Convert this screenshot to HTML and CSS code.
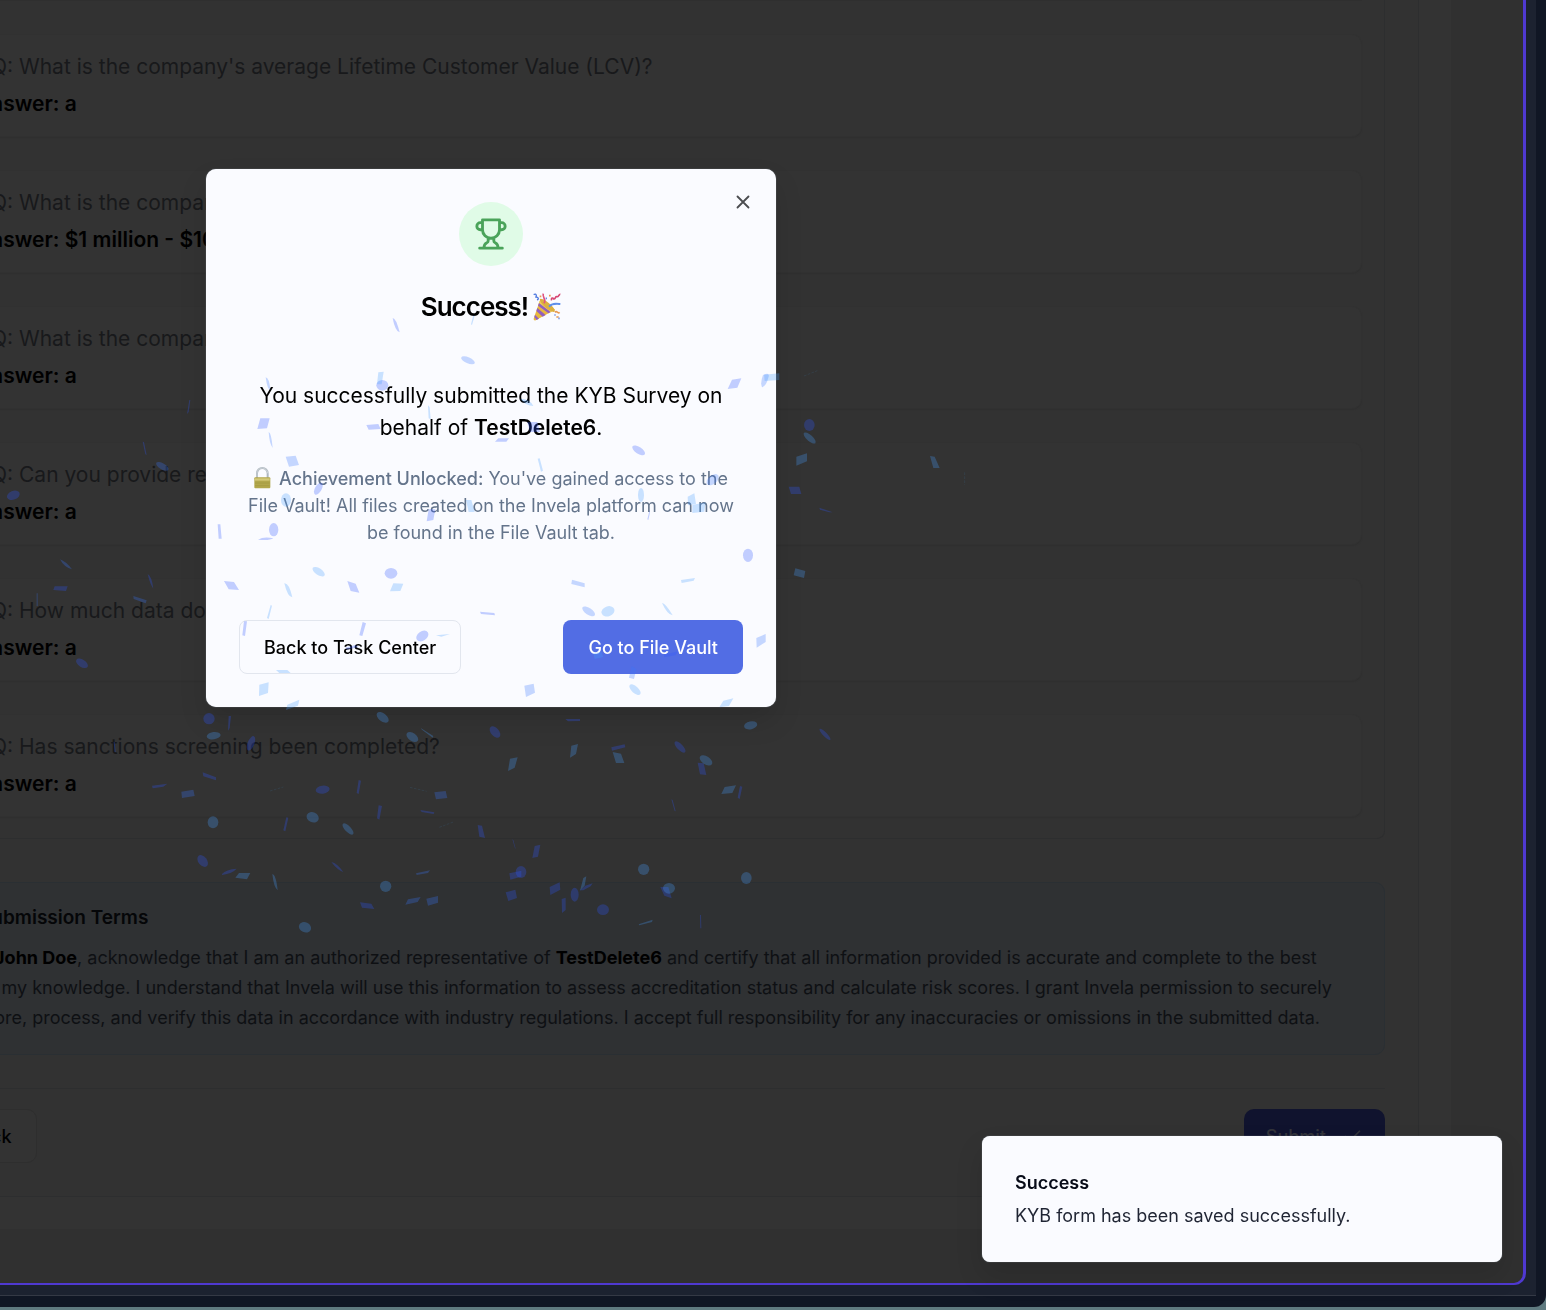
FILE: index.html
```html
<!DOCTYPE html>
<html lang="en">
<head>
<meta charset="utf-8">
<meta name="viewport" content="width=device-width, initial-scale=1">
<title>KYB Survey</title>
<link rel="stylesheet" href="styles.css">
</head>
<body>
<div class="window">
  <div class="window-inner">
    <div class="app">
      <main class="page">
        <div class="form">
          <section class="review">
            <div class="tail"></div>
            <div class="qa"><p class="question">Q: What is the company's average Lifetime Customer Value (LCV)?</p><p class="answer">Answer: a</p></div>
            <div class="qa"><p class="question">Q: What is the company</p><p class="answer">Answer: $1 million - $10</p></div>
            <div class="qa"><p class="question">Q: What is the company</p><p class="answer">Answer: a</p></div>
            <div class="qa"><p class="question">Q: Can you provide rec</p><p class="answer">Answer: a</p></div>
            <div class="qa"><p class="question">Q: How much data does</p><p class="answer">Answer: a</p></div>
            <div class="qa"><p class="question">Q: Has sanctions screening been completed?</p><p class="answer">Answer: a</p></div>
          </section>
          <section class="terms">
            <h3>Submission Terms</h3>
            <p>I, <strong>John Doe</strong>, acknowledge that I am an authorized representative of <strong>TestDelete6</strong> and certify that all information provided is accurate and complete to the best<br>of my knowledge. I understand that Invela will use this information to assess accreditation status and calculate risk scores. I grant Invela permission to securely<br>store, process, and verify this data in accordance with industry regulations. I accept full responsibility for any inaccuracies or omissions in the submitted data.</p>
          </section>
          <div class="form-actions">
            <button class="btn back" type="button">Back</button>
            <button class="btn submit" type="button">Submit
              <svg width="21" height="21" viewBox="0 0 24 24" fill="none" stroke="currentColor" stroke-width="2" stroke-linecap="round" stroke-linejoin="round" aria-hidden="true"><path d="M20 6 9 17l-5-5"/></svg>
            </button>
          </div>
        </div>
      </main>
    </div>
  </div>
</div>

<div class="overlay">
  <div class="modal" role="dialog" aria-modal="true" aria-labelledby="modal-title">
    <button class="close" type="button" aria-label="Close">
      <svg width="22" height="22" viewBox="0 0 24 24" fill="none" stroke="currentColor" stroke-width="2" stroke-linecap="round" aria-hidden="true"><path d="M18 6 6 18M6 6l12 12"/></svg>
    </button>
    <div class="trophy">
      <svg width="34" height="34" viewBox="0 0 24 24" fill="none" stroke="currentColor" stroke-width="2" stroke-linecap="round" stroke-linejoin="round" aria-hidden="true"><path d="M6 9H4.500a2.500 2.500 0 0 1 0-5H6M18 9h1.500a2.500 2.500 0 0 0 0-5H18M4 22h16M10 14.660V17c0 .550-.470.980-.970 1.210C7.850 18.750 7 20.240 7 22M14 14.660V17c0 .550.470.980.970 1.210C16.150 18.750 17 20.240 17 22M18 2H6v7a6 6 0 0 0 12 0V2Z"/></svg>
    </div>
    <h2 id="modal-title">Success!
      <svg width="28" height="28" viewBox="0 0 84 84" aria-hidden="true">
        <path d="M20 24 2 77q-1 6 6 5l58-32Z" fill="#e8b83c"/>
        <path d="M20 24 15 39l31 22 20-11Z" fill="#f3cf58"/>
        <path d="M13 45 38 66l-9 5L10 54ZM6 65l12 12-7 4-7-9ZM18 30l35 27-7 4L15 38Z" fill="#9260bd"/>
        <ellipse cx="43" cy="37" rx="8" ry="29" transform="rotate(-50 43 37)" fill="#dcb040"/>
        <path d="M48 41c9-11 21-9 34-8" fill="none" stroke="#5d8eea" stroke-width="6"/>
        <path d="M33 31C42 20 26 12 31 2" fill="none" stroke="#e0527f" stroke-width="5"/>
        <path d="M2 5c9-6 10 7 5 8 9-2 12 5 5 8" fill="none" stroke="#4d78df" stroke-width="4"/>
        <path d="M56 22c-3-8 5-9 6-4 6 1 5-10 10-7 5 2 5-8 10-7" fill="none" stroke="#d64773" stroke-width="5"/>
        <path d="M66 58c6-7 7 6 14 0M70 72h7M48 8h5M20 10h5" fill="none" stroke="#e79a55" stroke-width="5"/>
        <path d="M38 16h4M76 76h4M64 66h4" stroke="#6a8ae2" stroke-width="5"/>
      </svg>
    </h2>
    <p class="message">You successfully submitted the KYB Survey on<br>behalf of <strong>TestDelete6</strong>.</p>
    <p class="note"><svg class="lock" width="17" height="22" viewBox="0 0 51 66" aria-hidden="true"><path d="M9 34V19a16 16 0 0 1 32 0v15" fill="none" stroke="#aeb7bf" stroke-width="6"/><path d="M9 30V19a16 16 0 0 1 32 0" fill="none" stroke="#d9dfe4" stroke-width="2"/><rect x="1" y="31" width="48" height="33" rx="3" fill="#b2a74c"/><path d="M3 34h44v7H3z" fill="#d3c978"/><path d="M3 48h44M3 56h44" stroke="#a2973f" stroke-width="2"/></svg> <strong>Achievement Unlocked:</strong> You've gained access to the<br>File Vault! All files created on the Invela platform can now<br>be found in the File Vault tab.</p>
    <div class="modal-actions">
      <button class="btn outline" type="button">Back to Task Center</button>
      <button class="btn primary" type="button">Go to File Vault</button>
    </div>
  </div>
</div>

<div class="toast" role="status">
  <strong>Success</strong>
  <p>KYB form has been saved successfully.</p>
</div>

<svg class="confetti" width="1546" height="1310" viewBox="0 0 1546 1310" aria-hidden="true">
  <g transform="translate(200 160) scale(.33333)">
    <g class="c1">
      <path d="M181 775l28 0-8 30-29 2ZM499 795l36-3 7 15-36 2Z"/>
      <path d="M578 474q10 0 21 43-14-4-21-43Z"/>
      <ellipse cx="547" cy="676" rx="18" ry="16"/>
    </g>
    <g class="c2">
      <ellipse cx="804" cy="601" rx="22" ry="9" transform="rotate(23 804 601)"/>
      <path d="M197 652q11 2 14 38-9-1-14-38ZM206 816q8 2 12 48-10-14-12-48Z"/>
    </g>
    <g class="c3"><path d="M535 637l16-2-6 38-14 0ZM684 736l5 6 3 36-6-3ZM820 466l4 1-8 28-3-2Z"/></g>
  </g>
  <g transform="translate(490 160) scale(.33333)">
    <path class="c1" d="M726 659l28-4-12 28-29 4ZM112 786h30l8 30h-30Z"/>
    <path class="c2" d="M819 645q20-10 17 5-7 28-20 32-6-13 3-37Z"/>
    <path class="c3" d="M822 644l46-4v20l-44 3ZM90 716q30 0 40 22-22 0-40-22Z"/>
  </g>
  <g transform="translate(200 430) scale(.33333)">
    <g class="c1">
      <ellipse cx="355" cy="176" rx="10" ry="20" transform="rotate(30 355 176)"/>
      <ellipse cx="221" cy="299" rx="14" ry="20"/>
      <ellipse cx="573" cy="430" rx="19" ry="16"/>
      <ellipse cx="667" cy="618" rx="20" ry="14" transform="rotate(-35 667 618)"/>
      <path d="M686 238l20 0-6 32-20 4ZM53 283h8l4 43h-9ZM174 329q18-11 46-4-12 8-46 4ZM72 453l30 3 15 24-31-2ZM442 453l25 8 11 27-26-5ZM488 576l10 4-11 38-9-2ZM132 574h9l-6 44-8-2ZM840 545l43 4 2 7-42-4ZM436 653l30-8 10 6-36 8Z"/>
    </g>
    <g class="c2"><path d="M257 80l30-3 10 28-30 5Z"/></g>
    <g class="c3">
      <ellipse cx="258" cy="210" rx="15" ry="20"/>
      <ellipse cx="356" cy="425" rx="21" ry="10" transform="rotate(33 356 425)"/>
      <path d="M798 210h16l10 36h-18ZM580 460l30 1-9 22-31 1ZM253 460q14-2 24 42-14 0-24-42ZM212 525l4 2-10 40-5-3ZM178 764l28-7-2 32-27 9ZM228 720h34l10 9h-34ZM708 616l42-4-26 8ZM262 824l36-15-4 18-36 13Z"/>
    </g>
  </g>
  <g transform="translate(490 430) scale(.33333)">
    <g class="c1">
      <ellipse cx="446" cy="61" rx="22" ry="10" transform="rotate(33 446 61)"/>
      <ellipse cx="774" cy="376" rx="15" ry="20"/>
      <path d="M15 35l10-10h32l-8 10ZM522 674l42-10-8 12-34 6ZM472 268l7-28 1 8-5 22Z"/>
    </g>
    <g class="c2">
      <path d="M246 449l38 11v12l-40-10ZM103 767l28-6 4 27-27 13ZM799 624l28-12v24l-27 17ZM425 708l14 10-7 29-15-4Z"/>
      <ellipse cx="296" cy="544" rx="22" ry="10" transform="rotate(33 296 544)"/>
      <ellipse cx="668" cy="149" rx="21" ry="13" transform="rotate(-40 668 149)"/>
    </g>
    <g class="c3">
      <ellipse cx="453" cy="195" rx="9" ry="21"/><ellipse cx="354" cy="544" rx="20" ry="15" transform="rotate(-20 354 544)"/>
      <ellipse cx="435" cy="779" rx="21" ry="10" transform="rotate(42 435 779)"/>
      <path d="M593 200l20-10 5 32-24 4ZM607 225l40-8-4 28-36 4ZM573 450l42-6-4 8-36 7ZM516 519q10 0 32 37-16-2-32-37ZM143 86l6-1 10 37-6 3ZM700 812l30-7-13 23-29 4ZM310 670l24-5 6 16-26 6Z"/>
    </g>
  </g>
  <g transform="translate(0 700) scale(.33333)">
    <g class="c1">
      <circle cx="627" cy="56" r="17"/>
      <ellipse cx="753" cy="130" rx="10" ry="23" transform="rotate(22 753 130)"/>
      <ellipse cx="968" cy="269" rx="21" ry="12" transform="rotate(-7 968 269)"/>
      <ellipse cx="608" cy="483" rx="20" ry="13" transform="rotate(52 608 483)"/>
      <path d="M686 48l7 0-4 36-5 8ZM608 217l40 15v9l-38-12ZM456 257l46-6-12 9-32 5ZM1076 240l7 2-7 40-6-3ZM1136 316l10 2-8 41-7-4ZM859 352l6 1-9 41-6-3ZM666 522q12-14 44-16-12 14-44 19ZM994 486q18 4 36 30-18-6-36-30ZM1080 607l34 4 9 16-37-4ZM1261 330l42 7-2 5-36-6ZM341 126h3l3 30h-3Z"/>
    </g>
    <path class="c2" d="M544 275l36-6 4 19-38 6ZM1303 277l34-4 5 21-34 4ZM1224 598l38-7-9 15-37 8ZM1279 596l35-8v20l-30 9ZM1248 520l42-9-6 8-34 6Z"/>
    <g class="c3">
      <ellipse cx="641" cy="107" rx="21" ry="11" transform="rotate(-8 641 107)"/>
      <ellipse cx="1148" cy="52" rx="21" ry="12" transform="rotate(38 1148 52)"/>
      <ellipse cx="1237" cy="111" rx="20" ry="12" transform="rotate(35 1237 111)"/>
      <ellipse cx="639" cy="367" rx="16" ry="18"/><ellipse cx="938" cy="352" rx="19" ry="15" transform="rotate(25 938 352)"/>
      <ellipse cx="1044" cy="387" rx="22" ry="9" transform="rotate(46 1044 387)"/>
      <circle cx="1157" cy="559" r="17"/><ellipse cx="915" cy="682" rx="19" ry="15" transform="rotate(25 915 682)"/>
      <path d="M717 519h34l-10 19-35-5ZM817 522q11 2 16 49-12-10-16-49ZM1262 84l38 24-2 5-32-24Z"/>
      <path d="M810 273l40-12M1230 262l50 12M1318 382l42-16" fill="none" stroke="#48aeff" stroke-width="2" stroke-opacity=".15" stroke-dasharray="8 4"/>
    </g>
  </g>
  <g transform="translate(470 700) scale(.33333)">
    <g class="c1">
      <ellipse cx="75" cy="96" rx="20" ry="12" transform="rotate(48 75 96)"/>
      <ellipse cx="630" cy="141" rx="22" ry="9" transform="rotate(46 630 141)"/>
      <ellipse cx="1065" cy="103" rx="23" ry="6" transform="rotate(46 1065 103)"/>
      <ellipse cx="153" cy="516" rx="16" ry="18"/><ellipse cx="314" cy="584" rx="12" ry="21"/><ellipse cx="399" cy="629" rx="18" ry="16"/>
      <path d="M286 57h44v6l-36 1ZM424 142l40-9 2 9-40 10ZM683 188l18 2 8 35-19-2ZM810 258l7 2-8 37-6-4ZM604 298l4 2 9 34-3-1ZM23 375l13 2 9 37-17-4ZM127 418l3 2 7 26-2-1ZM194 438l17-4-7 36-17 4ZM118 520l36-8v18l-33 9ZM239 561l30-14 2 22-30 16ZM107 577l29-8 5 25-26 9ZM330 571l16-14 22-7-6 9-22 12ZM571 561h24l10 34-22-8ZM275 597l12-4v37l-11 9ZM690 645h3l1 40h-3Z"/>
    </g>
    <g class="c3">
      <ellipse cx="842" cy="76" rx="20" ry="12" transform="rotate(-12 842 76)"/>
      <ellipse cx="708" cy="181" rx="21" ry="12" transform="rotate(33 708 181)"/>
      <circle cx="521" cy="508" r="17"/><ellipse cx="829" cy="534" rx="16" ry="18"/><ellipse cx="597" cy="565" rx="18" ry="16"/>
      <path d="M120 176l23-4-9 31-20 10ZM304 137l20-5-6 30-18 11ZM428 156l25 5 10 28h-25ZM764 261l34-5-11 23-33 3ZM340 534l9-5-5 28-14 15ZM506 673l42-14-2 7-38 10Z"/>
    </g>
  </g>
  <g transform="translate(0 440) scale(.33333)">
    <g class="c1">
      <ellipse cx="40" cy="166" rx="20" ry="13" transform="rotate(-22 40 166)"/>
      <ellipse cx="246" cy="670" rx="20" ry="11" transform="rotate(33 246 670)"/>
      <path d="M164 439h39l-5 14-38-3ZM443 402q12 6 17 44-10-14-17-44ZM428 5l4 1 8 39-4-2ZM568-120l3 0-5 36-5 6Z"/>
    </g>
    <g class="c2">
      <ellipse cx="487" cy="79" rx="21" ry="9" transform="rotate(30 487 79)"/>
      <path d="M400 468l40 13-3 9-36-13ZM180 358q18 6 36 30-24-6-36-30ZM110 460h3v38h-3Z"/>
    </g>
  </g>
  <g transform="translate(770 350) scale(.33333)">
    <g class="c1"><ellipse cx="118" cy="225" rx="16" ry="18"/><path d="M56 410h32l6 22H63ZM148 473l40 14h-10l-28-8Z"/></g>
    <g class="c3"><ellipse cx="119" cy="264" rx="23" ry="9" transform="rotate(42 119 264)"/><path d="M79 320l32-10v24l-32 13ZM480 318l14 2 15 34h-19ZM76 655l30 8-4 21-31-8Z"/><path d="M584 367v38M102 78l40-16" fill="none" stroke="#48aeff" stroke-width="2" stroke-opacity=".15" stroke-dasharray="8 4"/></g>
  </g>
</svg>
</body>
</html>
```
FILE: styles.css
```css
* { box-sizing: border-box; }

body {
  margin: 0;
  background: #5f7a80;
  color: #000;
  font-family: Inter, "Liberation Sans", sans-serif;
  font-size: 18px;
  overflow-x: hidden;
}

h2, h3, p { margin: 0; }

button { font: inherit; cursor: pointer; }

.window {
  padding: 0 10px 11px 0;
  background: #101624;
  border-radius: 0 0 12px 0;
}

.window-inner {
  padding: 0 10px 10px 0;
  background: #1c2230;
  border-bottom: 1px solid #343945;
}

.app {
  padding: 0 72px 54px 0;
  background: #303030;
  border: solid #4f39d1;
  border-width: 0 2px 2px 0;
  border-right-width: 3px;
  border-radius: 0 0 12px 0;
  overflow: hidden;
}

.page {
  padding: 0 32px 32px 0;
  background: #333;
}

.form {
  padding: 0 33px 33px 0;
  background: #323232;
  border: solid #2d2e2f;
  border-width: 0 1px 1px 0;
}

.review {
  display: flex;
  flex-direction: column;
  gap: 33px;
  padding: 0 22px 21px 0;
  background: #323232;
  border: solid #2d2e2f;
  border-width: 0 1px 1px 0;
  border-radius: 0 0 8px 0;
}

.tail { height: 1px; background: #2f2f2f; }

.qa {
  display: flex;
  flex-direction: column;
  gap: 5px;
  margin-left: -40px;
  padding: 16px 16px 16px 14px;
  background: #333;
  border: 1px solid #313131;
  border-radius: 10px;
  box-shadow: 0 1px 1px #2f2f2f;
  font-size: 21px;
  line-height: 32px;
  white-space: nowrap;
}

.qa .question { padding-left: 16px; color: #18191b; }
.qa .answer { font-weight: 600; }

.terms {
  margin: 43px 0 0 -40px;
  padding: 19px 0 21px 18px;
  background: #2f3133;
  border: 1px solid #2a2f33;
  border-radius: 10px;
  color: #0e1013;
  white-space: nowrap;
}

.terms h3 { font-size: 19px; line-height: 32px; font-weight: 600; color: #050608; }
.terms p { margin-top: 9px; font-size: 18px; line-height: 30px; }
.terms strong { font-weight: 700; color: #000; }

.form-actions {
  display: flex;
  justify-content: space-between;
  margin-top: 33px;
  padding-top: 20px;
  border-top: 1px solid #2d2e2f;
}

.btn {
  display: flex;
  align-items: center;
  justify-content: center;
  height: 54px;
  padding: 0 24px;
  border: 1px solid transparent;
  border-radius: 8px;
  font-size: 18px;
  font-weight: 500;
  white-space: nowrap;
}

.btn.back { margin-left: -56px; background: #333; border-color: #2e2e2e; border-radius: 10px; }
.btn.submit { gap: 16px; padding: 0 21px; background: #10132e; border-radius: 10px; color: #32333a; }

.overlay {
  position: fixed;
  inset: 0;
  padding: 169px 0 0 206px;
}

.modal {
  position: relative;
  display: flex;
  flex-direction: column;
  align-items: center;
  width: 570px;
  padding: 33px;
  background: #fafbff;
  border-radius: 10px;
  box-shadow: 0 0 1px #a7b0bb, 0 14px 28px rgba(0, 0, 0, .12);
  text-align: center;
}

.close {
  position: absolute;
  top: 22px;
  right: 22px;
  display: flex;
  padding: 0;
  border: 0;
  background: none;
  color: #4b4c50;
}

.trophy {
  display: flex;
  align-items: center;
  justify-content: center;
  width: 64px;
  height: 64px;
  border-radius: 50%;
  background: #e0fbe7;
  color: #4aa35a;
}

.modal h2 {
  display: flex;
  align-items: center;
  gap: 5px;
  margin-top: 25px;
  font-size: 26px;
  line-height: 32px;
  font-weight: 600;
  letter-spacing: -1px;
}

.message { margin-top: 57px; font-size: 21px; line-height: 32px; white-space: nowrap; }
.message strong { font-weight: 600; }

.note { margin-top: 21px; color: #64748b; font-size: 18px; line-height: 27px; white-space: nowrap; }
.note strong { font-weight: 500; }
.lock { margin-right: 3px; vertical-align: -4px; }

.modal-actions {
  display: flex;
  justify-content: space-between;
  align-self: stretch;
  margin-top: 74px;
}

.btn.outline { background: #fafbff; border-color: #e2e6ee; color: #000; }
.btn.primary { background: #526de4; color: #fff; }

.toast {
  position: fixed;
  right: 44px;
  bottom: 48px;
  width: 520px;
  padding: 32px 33px 31px;
  background: #fafbff;
  border-radius: 8px;
  box-shadow: 0 0 1px #a7b0bb, 0 14px 28px rgba(0, 0, 0, .12);
  color: #1f2433;
  font-size: 18px;
  line-height: 30px;
}

.toast strong { display: block; font-weight: 600; color: #070b18; }
.toast p { margin-top: 3px; }

.confetti {
  position: absolute;
  top: 0;
  left: 0;
  pointer-events: none;
}

.c1, .c2, .c3 { fill-opacity: .28; }
.c1 { fill: #2d56ff; }
.c2 { fill: #3878ff; }
.c3 { fill: #489eff; }
```
